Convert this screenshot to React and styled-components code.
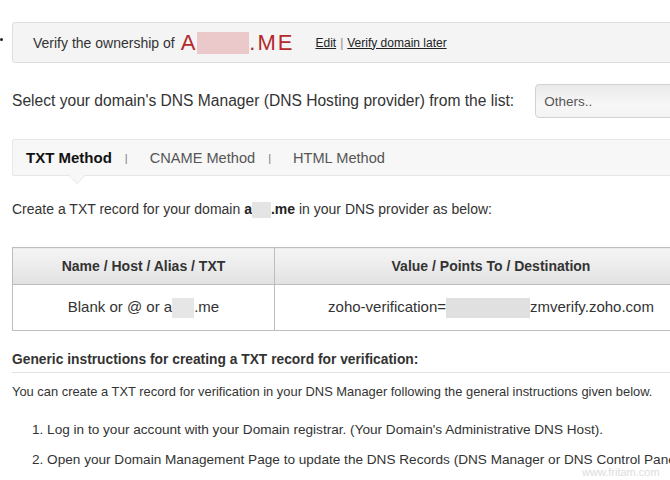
import styled, { createGlobalStyle } from "styled-components";

const GlobalStyle = createGlobalStyle`
  html, body {
    margin: 0;
    padding: 0;
    background: #ffffff;
    overflow: hidden;
  }
  body {
    font-family: "Liberation Sans", Arial, sans-serif;
    color: #333;
  }
`;

function App() {
  return (
    <>
      <GlobalStyle />
      <Page>
        <Dot />
        <Banner>
          <BannerText>Verify the ownership of</BannerText>
          <Domain>
            A<Blur w={52} h={22} tone="#ebc9ca" />.ME
          </Domain>
          <Links>
            <LinkText>Edit</LinkText>
            <Sep>|</Sep>
            <LinkText>Verify domain later</LinkText>
          </Links>
        </Banner>

        <SelectRow>
          <SelectLabel>
            Select your domain's DNS Manager (DNS Hosting provider) from the list:
          </SelectLabel>
          <SelectBox>Others..</SelectBox>
        </SelectRow>

        <Tabs>
          <Tab active>TXT Method</Tab>
          <TabSep>|</TabSep>
          <Tab>CNAME Method</Tab>
          <TabSep>|</TabSep>
          <Tab>HTML Method</Tab>
        </Tabs>

        <Intro>
          Create a TXT record for your domain <b>a</b>
          <Blur w={19} h={16} tone="#e4e4e4" />
          <b>.me</b> in your DNS provider as below:
        </Intro>

        <Table>
          <thead>
            <tr>
              <Th style={{ width: 261 }}>Name / Host / Alias / TXT</Th>
              <Th>Value / Points To / Destination</Th>
            </tr>
          </thead>
          <tbody>
            <tr>
              <Td>
                Blank or @ or a<Blur w={22} h={20} tone="#e6e6e6" />.me
              </Td>
              <Td>
                zoho-verification=<Blur w={84} h={20} tone="#e0e0e0" />zmverify.zoho.com
              </Td>
            </tr>
          </tbody>
        </Table>

        <SectionTitle>Generic instructions for creating a TXT record for verification:</SectionTitle>
        <Note>
          You can create a TXT record for verification in your DNS Manager following the general
          instructions given below.
        </Note>

        <Steps>
          <li>1. Log in to your account with your Domain registrar. (Your Domain's Administrative DNS Host).</li>
          <li>2. Open your Domain Management Page to update the DNS Records (DNS Manager or DNS Control Panel).</li>
        </Steps>
        <Watermark>www.fritam.com</Watermark>
      </Page>
    </>
  );
}
export default App;

const Page = styled.div`
  position: relative;
  width: 720px;
  height: 480px;
  padding: 22px 0 0 12px;
  box-sizing: border-box;
  overflow: hidden;
`;

const Dot = styled.span`
  position: absolute;
  left: 0;
  top: 38px;
  width: 3px;
  height: 3px;
  border-radius: 50%;
  background: #222;
`;

const Banner = styled.div`
  display: flex;
  align-items: center;
  width: 700px;
  height: 41px;
  padding-left: 20px;
  box-sizing: border-box;
  background: #f4f4f4;
  border: 1px solid #dedede;
  border-radius: 3px;
`;

const BannerText = styled.span`
  font-size: 14px;
  color: #333;
`;

const Domain = styled.span`
  display: inline-flex;
  align-items: center;
  margin-left: 6px;
  font-size: 22px;
  letter-spacing: 2px;
  color: #b3292d;
`;

const Blur = styled.span`
  display: inline-block;
  width: ${(p) => p.w}px;
  height: ${(p) => p.h}px;
  background: ${(p) => p.tone};
  vertical-align: middle;
`;

const Links = styled.span`
  display: inline-flex;
  align-items: center;
  margin-left: 21px;
  font-size: 12px;
  color: #222;
`;

const LinkText = styled.span`
  text-decoration: underline;
`;

const Sep = styled.span`
  margin: 0 4px;
  color: #888;
`;

const SelectRow = styled.div`
  display: flex;
  align-items: center;
  gap: 21px;
  margin-top: 21px;
`;

const SelectLabel = styled.span`
  font-size: 15.6px;
  color: #333;
`;

const SelectBox = styled.div`
  display: flex;
  align-items: center;
  width: 160px;
  height: 34px;
  padding-left: 8px;
  box-sizing: border-box;
  font-size: 13.5px;
  color: #555;
  border: 1px solid #d2d2d2;
  border-radius: 4px;
  background: linear-gradient(#e9e9e9, #f7f7f7 60%, #f3f3f3);
`;

const Tabs = styled.div`
  position: relative;
  display: flex;
  align-items: center;
  width: 700px;
  height: 37px;
  margin-top: 21px;
  padding-left: 13px;
  box-sizing: border-box;
  background: #f7f7f7;
  border: 1px solid #e6e6e6;
  border-radius: 2px;

  &::before,
  &::after {
    content: "";
    position: absolute;
    left: 55px;
    border-left: 9px solid transparent;
    border-right: 9px solid transparent;
  }
  &::before {
    bottom: -9px;
    border-top: 9px solid #e6e6e6;
  }
  &::after {
    bottom: -8px;
    left: 56px;
    border-left-width: 8px;
    border-right-width: 8px;
    border-top: 8px solid #f7f7f7;
  }
`;

const Tab = styled.span`
  font-size: ${(p) => (p.active ? "15px" : "14.6px")};
  font-weight: ${(p) => (p.active ? "bold" : "normal")};
  color: ${(p) => (p.active ? "#111" : "#555")};
`;

const TabSep = styled.span`
  margin: 0 22px 0 13px;
  font-size: 11px;
  color: #777;
`;

const Intro = styled.p`
  margin: 25px 0 0;
  font-size: 14px;
  color: #333;
  b {
    color: #222;
  }
`;

const Table = styled.table`
  width: 696px;
  margin-top: 29px;
  border-collapse: collapse;
`;

const Th = styled.th`
  height: 36px;
  padding: 0;
  border: 1px solid #bdbdbd;
  background: linear-gradient(#f5f5f5, #e2e2e2);
  color: #333;
  font-size: 14px;
  font-weight: bold;
  text-align: center;
`;

const Td = styled.td`
  height: 45px;
  padding: 0;
  border: 1px solid #bdbdbd;
  text-align: center;
  font-size: 15px;
  color: #333;
`;

const SectionTitle = styled.h4`
  width: 660px;
  margin: 21px 0 0;
  padding-bottom: 5px;
  font-size: 13.8px;
  font-weight: bold;
  color: #333;
  border-bottom: 1px solid #e2e2e2;
`;

const Note = styled.p`
  margin: 11px 0 0;
  font-size: 12.9px;
  color: #333;
  white-space: nowrap;
`;

const Steps = styled.ol`
  list-style: none;
  margin: 23px 0 0;
  padding-left: 20px;
  font-size: 13.6px;
  color: #333;
  white-space: nowrap;

  li + li {
    margin-top: 15px;
  }
`;

const Watermark = styled.span`
  position: absolute;
  left: 582px;
  top: 466px;
  font-size: 11px;
  color: #ddd;
`;
